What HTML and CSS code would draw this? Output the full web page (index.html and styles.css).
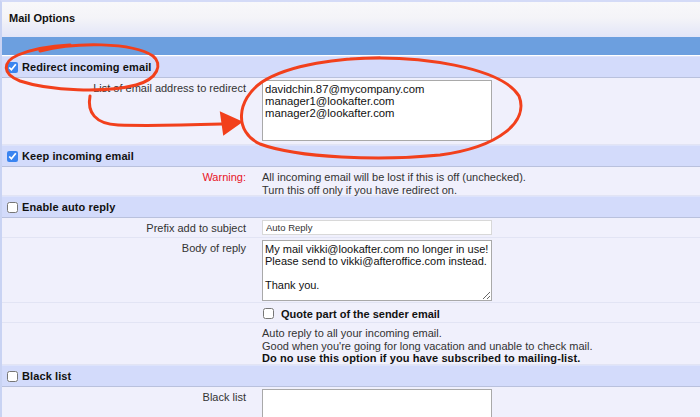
FILE: index.html
```html
<!DOCTYPE html>
<html lang="en">
<head>
    <meta charset="UTF-8">
    <meta name="viewport" content="width=device-width, initial-scale=1.0">
    <title>Mail Options</title>
    <link rel="stylesheet" href="styles.css">
</head>
<body>
    <div class="panel">
        <div class="title">Mail Options</div>
        <div class="bar"></div>

        <div class="section">
            <input type="checkbox" checked>
            <span>Redirect incoming email</span>
        </div>
        <div class="row row-redirect">
            <div class="label">List of email address to redirect</div>
            <div class="value">
                <textarea class="box box-redirect">davidchin.87@mycompany.com
manager1@lookafter.com
manager2@lookafter.com</textarea>
            </div>
        </div>

        <div class="section">
            <input type="checkbox" checked>
            <span>Keep incoming email</span>
        </div>
        <div class="row row-warning">
            <div class="label warning">Warning:</div>
            <div class="value text">All incoming email will be lost if this is off (unchecked).<br>Turn this off only if you have redirect on.</div>
        </div>

        <div class="section">
            <input type="checkbox">
            <span>Enable auto reply</span>
        </div>
        <div class="row row-prefix">
            <div class="label">Prefix add to subject</div>
            <div class="value">
                <input type="text" class="field" value="Auto Reply">
            </div>
        </div>
        <div class="row row-body">
            <div class="label">Body of reply</div>
            <div class="value">
                <textarea class="box box-body">My mail vikki@lookafter.com no longer in use!
Please send to vikki@afteroffice.com instead.

Thank you.</textarea>
            </div>
        </div>
        <div class="row row-quote">
            <div class="label"></div>
            <label class="value quote">
                <input type="checkbox">
                <span>Quote part of the sender email</span>
            </label>
        </div>
        <div class="row row-desc">
            <div class="label"></div>
            <div class="value text">Auto reply to all your incoming email.<br>Good when you're going for long vacation and unable to check mail.<br><b>Do no use this option if you have subscribed to mailing-list.</b></div>
        </div>

        <div class="section">
            <input type="checkbox">
            <span>Black list</span>
        </div>
        <div class="row row-black">
            <div class="label">Black list</div>
            <div class="value">
                <textarea class="box box-black"></textarea>
            </div>
        </div>
    </div>

    <!-- hand drawn annotations -->
    <svg class="marks" viewBox="0 0 700 417" fill="none" stroke="#f2401c" stroke-width="3" stroke-linecap="round">
        <path d="M40 51 C75 42 132 42 153 56 C163 64 158 79 136 85 C105 93 50 91 20 81 C2 74 2 62 18 55 C30 50 50 46 70 45"></path>
        <path d="M90 96 C87 112 95 124 118 125 C150 126 190 125 222 124"></path>
        <path d="M221 113 L241 122 L224 134 Z" fill="#f2401c" stroke-width="2"></path>
        <path d="M350 59 C420 54 502 68 519 96 C529 121 500 147 440 155 C380 161 298 158 260 144 C234 132 236 100 262 82 C290 64 340 58 380 58"></path>
    </svg>
</body>
</html>
```

FILE: styles.css
```css
* {
    margin: 0;
    padding: 0;
    box-sizing: border-box;
}

body {
    width: 700px;
    height: 417px;
    overflow: hidden;
    background: #f0f0fc;
    font-family: "Liberation Sans", Arial, sans-serif;
    font-size: 11px;
    color: #222;
    position: relative;
}

.panel {
    border-left: 2px solid #c9d3f3;
    border-top: 2px solid #d4dbf7;
}

.title {
    height: 35px;
    padding: 10px 7px;
    font-weight: bold;
    color: #111;
    background: linear-gradient(#f8f8fa, #f4f4f8 45%, #e2e5f8);
}

.bar {
    height: 19px;
    background: #6c9fdf;
    border-bottom: 1px solid #fff;
}

.section {
    display: flex;
    align-items: center;
    height: 22px;
    padding-left: 5px;
    background: #d3dbfb;
    border-top: 1px solid #dde3fb;
    border-bottom: 1px solid #b9c1dd;
    font-weight: bold;
    color: #111;
    letter-spacing: 0.1px;
}

.section input,
.quote input {
    width: 11px;
    height: 11px;
    margin-right: 4px;
    accent-color: #3a84f0;
}

.row {
    display: grid;
    grid-template-columns: 252px 1fr;
    border-bottom: 1px solid #e2e4f4;
}

.label {
    text-align: right;
    padding: 4px 8px 0 0;
    color: #333;
}

.warning {
    color: #e8131f;
}

.value {
    padding: 2px 0 0 8px;
}

.text {
    padding-top: 4px;
    line-height: 12.5px;
    color: #333;
}

.text b {
    color: #111;
    letter-spacing: 0.1px;
}

.row-redirect { height: 67px; }
.row-warning { height: 29px; }
.row-prefix { height: 20px; }
.row-body { height: 65px; }
.row-quote { height: 20px; }
.row-desc { height: 42px; }
.row-black { height: 40px; }

.box {
    display: block;
    width: 230px;
    height: 61px;
    padding: 2px;
    border: 1px solid #a9a9a9;
    background: #fff;
    font-family: "Liberation Sans", Arial, sans-serif;
    font-size: 11px;
    line-height: 12px;
    color: #111;
    resize: none;
}

.box-body {
    resize: both;
}

.box-redirect {
    font-size: 11.3px;
}

.box-black {
    height: 40px;
}

.field {
    display: block;
    width: 230px;
    height: 15px;
    padding: 0 3px;
    border: 1px solid #d8d8d8;
    background: #fff;
    font-family: "Liberation Sans", Arial, sans-serif;
    font-size: 9.5px;
    color: #333;
}

.quote {
    display: flex;
    align-items: center;
    padding-left: 9px;
    font-weight: bold;
    color: #111;
}

.quote input {
    margin-right: 7px;
}

.marks {
    position: absolute;
    left: 0;
    top: 0;
    width: 700px;
    height: 417px;
    pointer-events: none;
}
```
